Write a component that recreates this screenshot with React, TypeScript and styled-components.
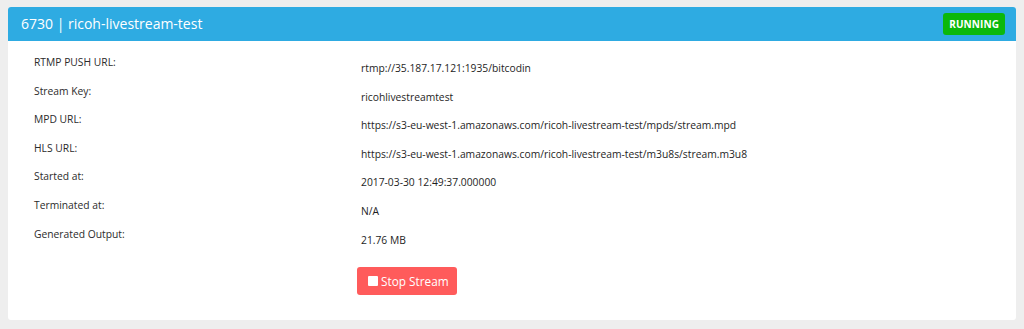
import React from "react";
import styled, { createGlobalStyle } from "styled-components";

const GlobalStyle = createGlobalStyle`
  html, body { margin: 0; padding: 0; background: #eeeeee; }
  body { font-family: "Open Sans", "Liberation Sans", sans-serif; color: #333; }
`;

const Page = styled.div`
  padding: 7px 8px 9px 8px;
`;

const Card = styled.div`
  background: #ffffff;
  border-radius: 3px;
  overflow: hidden;
`;

const Header = styled.div`
  height: 34px;
  background: #2eabe2;
  display: flex;
  align-items: center;
  justify-content: space-between;
  padding: 0 11px 0 13px;
`;

const Title = styled.div`
  color: #ffffff;
  font-size: 14px;
  line-height: 20px;
  margin-top: -1px;
`;

const Badge = styled.span`
  background: #0bb80b;
  color: #ffffff;
  font-weight: 700;
  font-size: 10px;
  line-height: 22px;
  height: 22px;
  padding: 0 6px;
  border-radius: 3px;
  letter-spacing: 0.1px;
`;

const Body = styled.div`
  padding: 13px 0 25px 26px;
`;

const Grid = styled.div`
  display: grid;
  grid-template-columns: 327px 1fr;
  grid-auto-rows: 28.6px;
`;

const Label = styled.div`
  font-size: 10.3px;
  line-height: 17px;
  color: #2b2b2b;
`;

const Value = styled.div`
  font-size: 10.3px;
  line-height: 17px;
  color: #1e1e1e;
  padding-top: 6px;
`;

const Actions = styled.div`
  padding-left: 323px;
  margin-top: 13px;
`;

const StopButton = styled.button`
  display: inline-flex;
  align-items: center;
  gap: 3px;
  width: 100px;
  height: 28px;
  padding: 0 0 0 11px;
  border: none;
  border-radius: 3px;
  background: #ff5b5b;
  color: #ffffff;
  font-family: "Open Sans", "Liberation Sans", sans-serif;
  font-size: 11.8px;
  white-space: nowrap;
  cursor: pointer;
`;

const StopIcon = styled.span`
  width: 10px;
  height: 10px;
  background: #ffffff;
  border-radius: 1px;
  display: inline-block;
`;

const rows: [string, string][] = [
  ["RTMP PUSH URL:", "rtmp://35.187.17.121:1935/bitcodin"],
  ["Stream Key:", "ricohlivestreamtest"],
  ["MPD URL:", "https://s3-eu-west-1.amazonaws.com/ricoh-livestream-test/mpds/stream.mpd"],
  ["HLS URL:", "https://s3-eu-west-1.amazonaws.com/ricoh-livestream-test/m3u8s/stream.m3u8"],
  ["Started at:", "2017-03-30 12:49:37.000000"],
  ["Terminated at:", "N/A"],
  ["Generated Output:", "21.76 MB"],
];

export default function App() {
  return (
    <>
      <GlobalStyle />
      <Page>
        <Card>
          <Header>
            <Title>6730 | ricoh-livestream-test</Title>
            <Badge>RUNNING</Badge>
          </Header>
          <Body>
            <Grid>
              {rows.map(([l, v]) => (
                <React.Fragment key={l}>
                  <Label>{l}</Label>
                  <Value>{v}</Value>
                </React.Fragment>
              ))}
            </Grid>
            <Actions>
              <StopButton>
                <StopIcon />
                Stop Stream
              </StopButton>
            </Actions>
          </Body>
        </Card>
      </Page>
    </>
  );
}
